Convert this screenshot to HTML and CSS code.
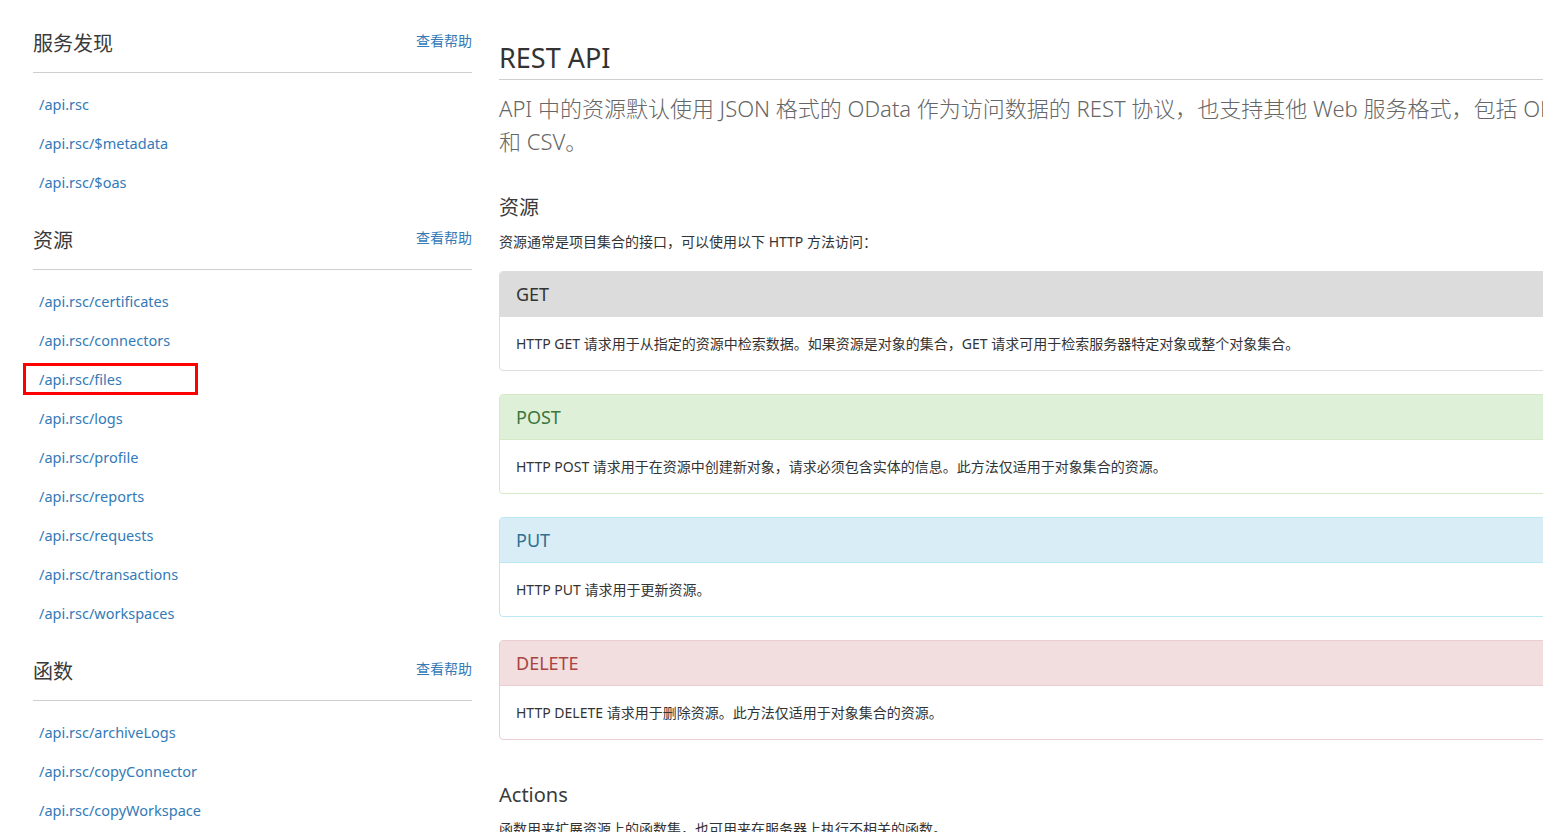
FILE: index.html
```html
<!DOCTYPE html>
<html lang="zh-CN">
<head>
<meta charset="utf-8">
<title>REST API</title>
<link rel="stylesheet" href="styles.css">
</head>
<body>
<div class="page">
  <aside class="sidebar">
    <section class="nav-section">
      <div class="nav-head">
        <h3 class="nav-title">服务发现</h3>
        <a class="help" href="#">查看帮助</a>
      </div>
      <ul class="nav-list">
        <li><a href="#">/api.rsc</a></li>
        <li><a href="#">/api.rsc/$metadata</a></li>
        <li><a href="#">/api.rsc/$oas</a></li>
      </ul>
    </section>
    <section class="nav-section">
      <div class="nav-head">
        <h3 class="nav-title">资源</h3>
        <a class="help" href="#">查看帮助</a>
      </div>
      <ul class="nav-list">
        <li><a href="#">/api.rsc/certificates</a></li>
        <li><a href="#">/api.rsc/connectors</a></li>
        <li class="marked"><a href="#">/api.rsc/files</a><span class="mark-box"></span></li>
        <li><a href="#">/api.rsc/logs</a></li>
        <li><a href="#">/api.rsc/profile</a></li>
        <li><a href="#">/api.rsc/reports</a></li>
        <li><a href="#">/api.rsc/requests</a></li>
        <li><a href="#">/api.rsc/transactions</a></li>
        <li><a href="#">/api.rsc/workspaces</a></li>
      </ul>
    </section>
    <section class="nav-section">
      <div class="nav-head">
        <h3 class="nav-title">函数</h3>
        <a class="help" href="#">查看帮助</a>
      </div>
      <ul class="nav-list">
        <li><a href="#">/api.rsc/archiveLogs</a></li>
        <li><a href="#">/api.rsc/copyConnector</a></li>
        <li><a href="#">/api.rsc/copyWorkspace</a></li>
      </ul>
    </section>
  </aside>

  <main class="main">
    <h2 class="page-title">REST API</h2>
    <p class="lead">API 中的资源默认使用 JSON 格式的 OData 作为访问数据的 REST 协议，也支持其他 Web 服务格式，包括 OData Atom、XML<br>和 CSV。</p>

    <h3 class="sub-title">资源</h3>
    <p class="desc">资源通常是项目集合的接口，可以使用以下 HTTP 方法访问：</p>

    <div class="panel panel-get">
      <div class="panel-head">GET</div>
      <div class="panel-body">HTTP GET 请求用于从指定的资源中检索数据。如果资源是对象的集合，GET 请求可用于检索服务器特定对象或整个对象集合。</div>
    </div>
    <div class="panel panel-post">
      <div class="panel-head">POST</div>
      <div class="panel-body">HTTP POST 请求用于在资源中创建新对象，请求必须包含实体的信息。此方法仅适用于对象集合的资源。</div>
    </div>
    <div class="panel panel-put">
      <div class="panel-head">PUT</div>
      <div class="panel-body">HTTP PUT 请求用于更新资源。</div>
    </div>
    <div class="panel panel-delete">
      <div class="panel-head">DELETE</div>
      <div class="panel-body">HTTP DELETE 请求用于删除资源。此方法仅适用于对象集合的资源。</div>
    </div>

    <h3 class="sub-title actions">Actions</h3>
    <p class="desc">函数用来扩展资源上的函数集，也可用来在服务器上执行不相关的函数。</p>
  </main>
</div>
</body>
</html>
```

FILE: styles.css
```css
html, body {
  margin: 0;
  padding: 0;
  overflow: hidden;
  background: #fff;
}

body {
  font-family: "Noto Sans", "Noto Sans CJK SC", sans-serif;
  color: #333;
}

a {
  color: #337ab7;
  text-decoration: none;
}

.page {
  display: flex;
  align-items: flex-start;
  gap: 27px;
  padding-left: 33px;
  width: max-content;
}

/* Sidebar */
.sidebar {
  flex: 0 0 439px;
  padding-top: 4px;
}

.nav-head {
  display: flex;
  justify-content: space-between;
  align-items: flex-start;
  padding-top: 26px;
  padding-bottom: 14px;
  border-bottom: 1px solid #cfcfcf;
}

.nav-title {
  margin: 0;
  font-size: 20px;
  line-height: 28px;
  font-weight: 400;
  color: #3a3a3a;
}

.help {
  font-size: 14px;
  line-height: 22px;
}

.nav-list {
  list-style: none;
  margin: 0;
  padding: 11px 0 0 0;
}

.nav-list li {
  position: relative;
  padding: 9.5px 0 9.5px 6px;
  font-size: 14.5px;
  line-height: 20px;
}

.mark-box {
  position: absolute;
  left: -10px;
  top: 3.5px;
  width: 169px;
  height: 26px;
  border: 3px solid #ff0000;
}

/* Main */
.main {
  flex: 0 0 1400px;
  padding-top: 40px;
}

.page-title {
  margin: 0;
  font-size: 27px;
  line-height: 36px;
  font-weight: 400;
  color: #333;
  padding-bottom: 3px;
  border-bottom: 1px solid #cfcfcf;
}

.lead {
  margin: 12px 0 0 0;
  font-size: 22px;
  line-height: 33px;
  font-weight: 300;
  color: #666;
}

.sub-title {
  margin: 36px 0 0 0;
  font-size: 20px;
  line-height: 28px;
  font-weight: 400;
  color: #3a3a3a;
}

.sub-title.actions {
  margin-top: 41px;
}

.desc {
  margin: 10px 0 0 0;
  font-size: 14px;
  line-height: 20px;
  color: #333;
}

.panel {
  margin-top: 19px;
  border: 1px solid #ddd;
  border-radius: 4px;
  overflow: hidden;
}

.panel + .panel {
  margin-top: 23px;
}

.panel-head {
  padding: 10px 16px;
  font-size: 18px;
  line-height: 24px;
  border-bottom: 1px solid #ddd;
}

.panel-body {
  padding: 16px 16px;
  font-size: 14px;
  line-height: 21px;
  color: #333;
}

.panel-get .panel-head {
  background: #dcdcdc;
  color: #333;
}

.panel-post {
  border-color: #d6e9c6;
}
.panel-post .panel-head {
  background: #dff0d8;
  color: #3c763d;
  border-bottom-color: #d6e9c6;
}

.panel-put {
  border-color: #bce8f1;
}
.panel-put .panel-head {
  background: #d9edf7;
  color: #31708f;
  border-bottom-color: #bce8f1;
}

.panel-delete {
  border-color: #ebccd1;
}
.panel-delete .panel-head {
  background: #f2dede;
  color: #a94442;
  border-bottom-color: #ebccd1;
}
```
